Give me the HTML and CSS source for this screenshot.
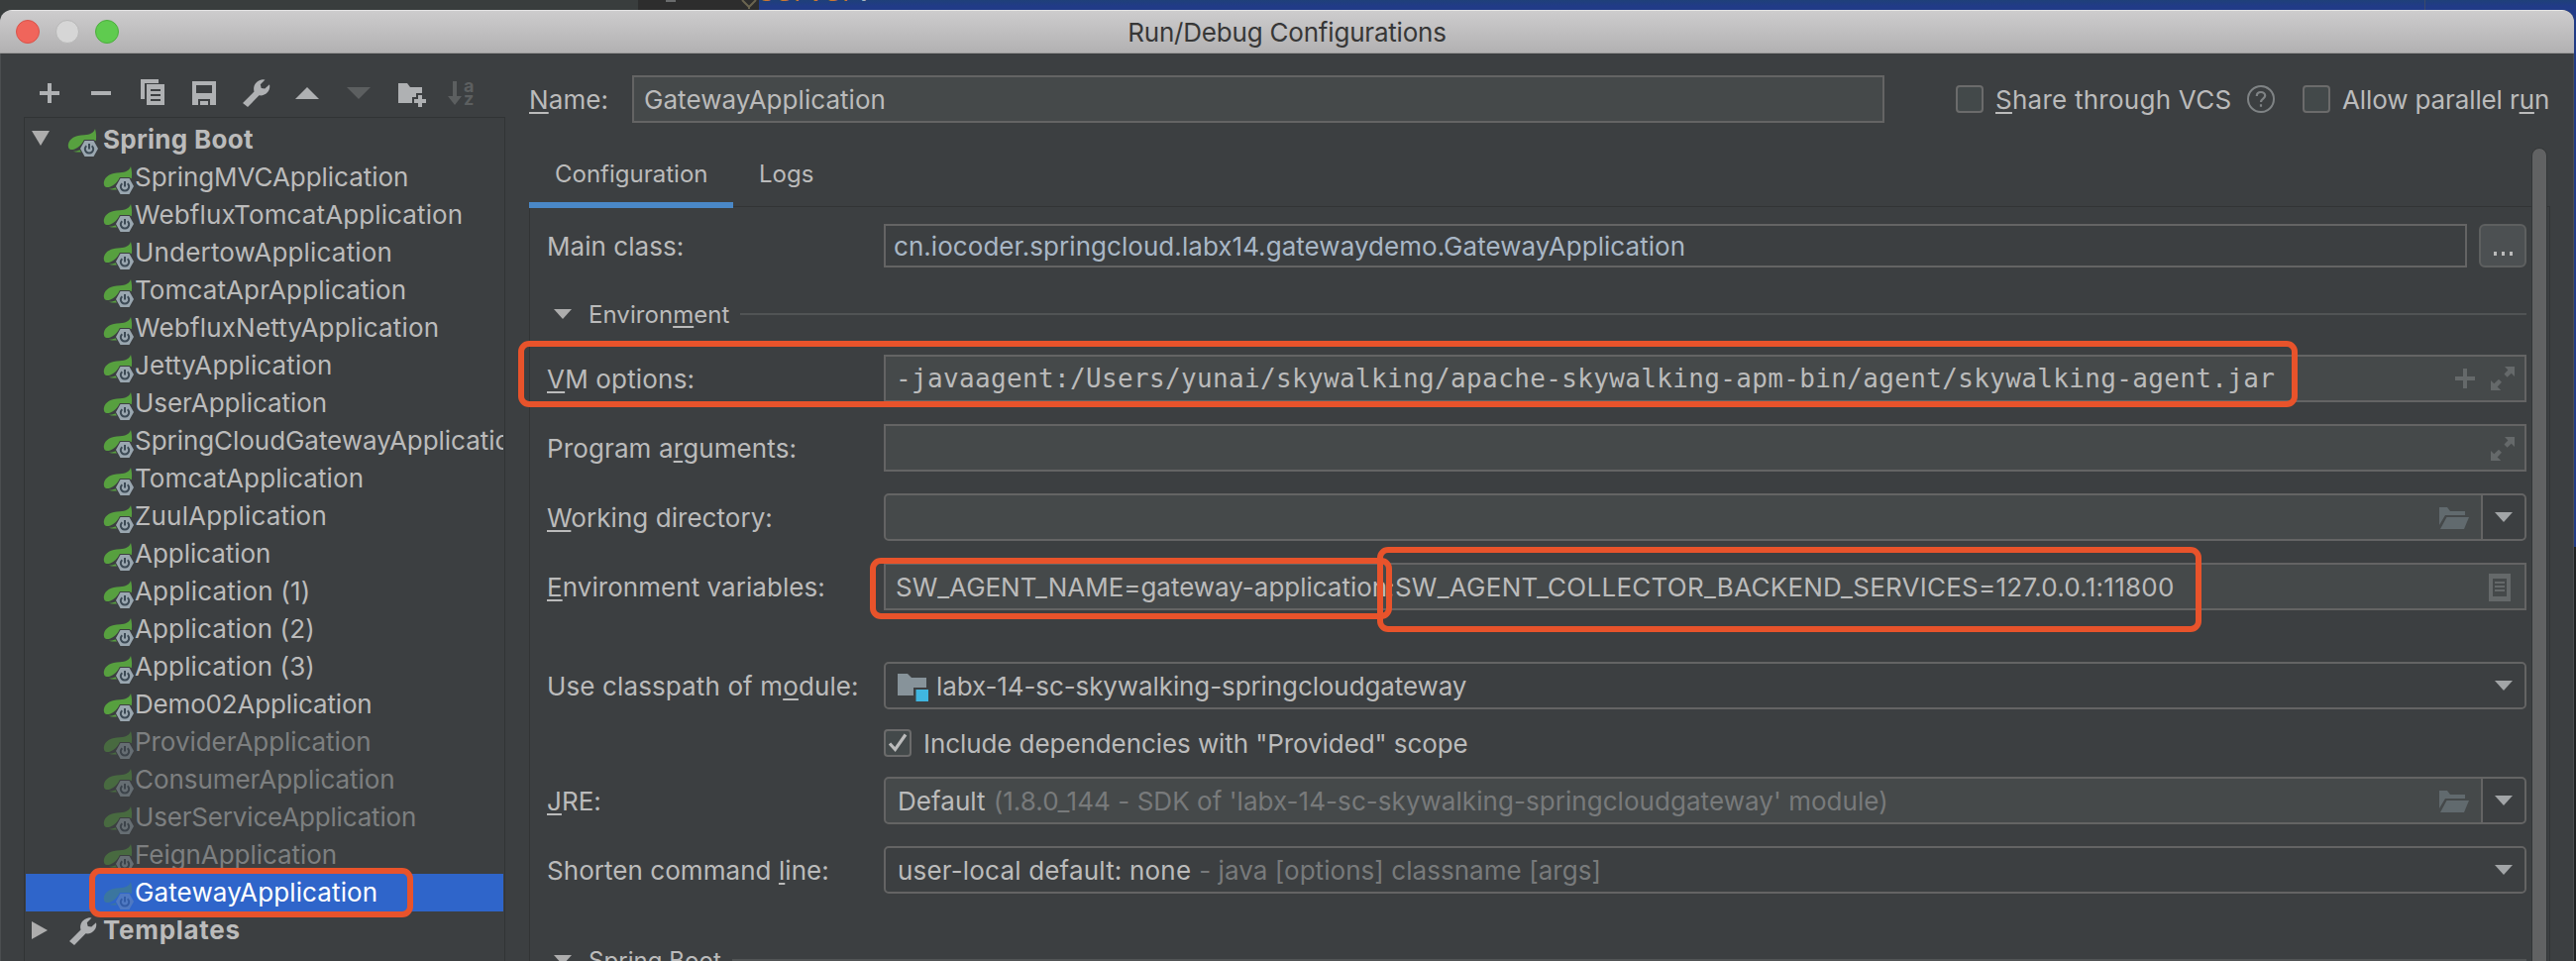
FILE: index.html
```
<!DOCTYPE html>
<html lang="en">
<head>
<meta charset="utf-8">
<title>Run/Debug Configurations</title>
<link rel="stylesheet" href="styles.css">
</head>
<body>
<svg class="defs" width="0" height="0">
  <symbol id="spring" viewBox="0 0 32 32">
    <path class="leaf" d="M29 2C27.500 6 24 8 18 8.300C9 8.800 3 11.500 1.800 18C1.600 20.500 2.500 23 4.500 23C9 23.500 13 20 16 16.500L29.800 14C30.500 10 30 6 29 2Z"/>
    <path class="leaf" d="M6.500 24.700C10 25 14 24 17 21V25.600H10Z"/>
    <path class="hex" d="M14 22L18.500 14H27.500L32 22L27.500 30H18.500Z"/>
    <path fill="none" stroke="#3c4a55" stroke-width="2" d="M20.300 19.200A4.200 4.200 0 1 0 25.700 19.200M23 17V22.500"/>
  </symbol>
  <symbol id="wrench" viewBox="0 0 32 32">
    <path fill="currentColor" d="M3 26L14.500 14.600C13 9 16 3.500 23 2.200L25.500 2.600L20.800 7.200L21.700 11L25.300 11.600L30 7.200C31.500 13 26.500 19.300 19.500 18.300L8 30Z"/>
  </symbol>
  <symbol id="expand" viewBox="0 0 24 24">
    <path fill="currentColor" d="M14 0H24V10L20.700 6.800L16.600 10.800L13.500 7.600L17.400 3.500ZM0 24V14L3.300 17.200L8 12.700L11 15.800L6.600 20.500L10.300 24Z"/>
  </symbol>
  <symbol id="folder-open" viewBox="0 0 30 22">
    <path fill="currentColor" d="M0 0H8L11 4H26V8H6L0 18ZM7.500 10H30L25 22H1Z"/>
  </symbol>
  <symbol id="tri-down" viewBox="0 0 18 10" preserveAspectRatio="none">
    <path fill="currentColor" d="M0 0H18L9 10Z"/>
  </symbol>
</svg>

<div class="editor-strip">
  <div class="strip-project"></div>
  <div class="strip-gutter"><i class="gutter-mark"></i>
    <svg class="fold" width="16" height="9" viewBox="0 0 16 9"><path d="M1 0L8 7L15 0M8 7V9" fill="none" stroke="#6b6550" stroke-width="2"/></svg>
  </div>
  <div class="strip-code"><span class="code-line">server<b>:</b></span></div>
  <div class="strip-edge"></div>
</div>

<main class="window">
  <header class="titlebar">
    <div class="lights"><i class="light close"></i><i class="light min"></i><i class="light max"></i></div>
    <h1 class="title">Run/Debug Configurations</h1>
  </header>

  <div class="body">
    <aside class="sidebar">
      <div class="toolbar">
        <svg viewBox="0 0 32 32"><path d="M14 6H18V14H26V18H18V26H14V18H6V14H14Z"/></svg>
        <svg viewBox="0 0 32 32"><path d="M6 14H26V18H6Z"/></svg>
        <svg viewBox="0 0 32 32"><path fill-rule="evenodd" d="M4 2H22V6H8V22H4ZM10 7H28V28H10ZM14 12V14H24V12ZM14 17V19H24V17ZM14 22V24H24V22Z"/></svg>
        <svg viewBox="0 0 32 32"><path fill-rule="evenodd" d="M4 4H28V28H22V22H10V28H4ZM8 8V16H24V8ZM12 24H20V28H12Z"/></svg>
        <svg><use href="#wrench"/></svg>
        <svg viewBox="0 0 32 32"><path d="M4 22L16 10L28 22Z"/></svg>
        <svg class="off" viewBox="0 0 32 32"><path d="M4 10H28L16 22Z"/></svg>
        <svg viewBox="0 0 32 32"><path d="M4 6H13L16 10H28V16H22V20H18V26H4ZM24 18H28V22H32V26H28V30H24V26H20V22H24Z"/></svg>
        <svg class="off" viewBox="0 0 32 32"><path d="M7 4H11V19H16L9 28L2 19H7Z"/><text x="18" y="14.500" class="az">a</text><text x="18" y="28" class="az">z</text></svg>
      </div>
      <div class="tree">
        <div class="row root"><svg class="twist"><path d="M0 0H18L9 15Z"/></svg><svg class="ico"><use href="#spring"/></svg><span>Spring Boot</span></div>
        <div class="row"><svg class="ico"><use href="#spring"/></svg><span>SpringMVCApplication</span></div>
        <div class="row"><svg class="ico"><use href="#spring"/></svg><span class="mid">WebfluxTomcatApplication</span></div>
        <div class="row"><svg class="ico"><use href="#spring"/></svg><span class="wide">UndertowApplication</span></div>
        <div class="row"><svg class="ico"><use href="#spring"/></svg><span class="mid">TomcatAprApplication</span></div>
        <div class="row"><svg class="ico"><use href="#spring"/></svg><span class="wide">WebfluxNettyApplication</span></div>
        <div class="row"><svg class="ico"><use href="#spring"/></svg><span class="mid">JettyApplication</span></div>
        <div class="row"><svg class="ico"><use href="#spring"/></svg><span>UserApplication</span></div>
        <div class="row"><svg class="ico"><use href="#spring"/></svg><span>SpringCloudGatewayApplication</span></div>
        <div class="row"><svg class="ico"><use href="#spring"/></svg><span class="mid">TomcatApplication</span></div>
        <div class="row"><svg class="ico"><use href="#spring"/></svg><span class="wide">ZuulApplication</span></div>
        <div class="row"><svg class="ico"><use href="#spring"/></svg><span>Application</span></div>
        <div class="row"><svg class="ico"><use href="#spring"/></svg><span class="wide">Application (1)</span></div>
        <div class="row"><svg class="ico"><use href="#spring"/></svg><span class="mid">Application (2)</span></div>
        <div class="row"><svg class="ico"><use href="#spring"/></svg><span class="mid">Application (3)</span></div>
        <div class="row"><svg class="ico"><use href="#spring"/></svg><span class="narrow">Demo02Application</span></div>
        <div class="row dim"><svg class="ico"><use href="#spring"/></svg><span>ProviderApplication</span></div>
        <div class="row dim"><svg class="ico"><use href="#spring"/></svg><span>ConsumerApplication</span></div>
        <div class="row dim"><svg class="ico"><use href="#spring"/></svg><span class="narrow">UserServiceApplication</span></div>
        <div class="row dim"><svg class="ico"><use href="#spring"/></svg><span>FeignApplication</span></div>
        <div class="row selected"><svg class="ico"><use href="#spring"/></svg><span class="mid">GatewayApplication</span></div>
        <div class="row root"><svg class="twist closed"><path d="M0 0L16 9L0 18Z"/></svg><svg class="ico wr"><use href="#wrench"/></svg><span class="templates">Templates</span></div>
      </div>
    </aside>

    <section class="detail">
      <div class="name-row">
        <label class="name-label"><u>N</u>ame:</label>
        <div class="field name-field">GatewayApplication</div>
        <i class="check"></i><span class="share"><u>S</u>hare through VCS</span>
        <svg class="help" viewBox="0 0 28 28"><circle cx="14" cy="14" r="13" fill="none" stroke="#7f8385" stroke-width="2"/><path d="M9.800 11C9.800 8.300 11.600 7 14 7C16.400 7 18.200 8.500 18.200 10.600C18.200 13.600 14 13.600 14 17M14 19.300V21.800" fill="none" stroke="#7f8385" stroke-width="2.200"/></svg>
        <i class="check"></i><span class="parallel">Allow parallel r<u>u</u>n</span>
      </div>

      <nav class="tabs">
        <div class="tab active">Configuration</div>
        <div class="tab logs">Logs</div>
      </nav>

      <div class="panel">
        <div class="line main-class">
          <label>Main class:</label>
          <div class="field flat">cn.iocoder.springcloud.labx14.gatewaydemo.GatewayApplication</div>
          <div class="dots"><i></i><i></i><i></i></div>
        </div>
        <div class="section env"><svg class="tri"><use href="#tri-down"/></svg><span>Environ<u>m</u>ent</span><hr></div>
        <div class="line vm">
          <label class="wide"><u>V</u>M options:</label>
          <div class="field mono"><span>-javaagent:/Users/yunai/skywalking/apache-skywalking-apm-bin/agent/skywalking-agent.jar</span>
            <svg class="plus" viewBox="0 0 20 20"><path d="M8 0H12V8H20V12H12V20H8V12H0V8H8Z"/></svg><svg class="expand"><use href="#expand"/></svg></div>
        </div>
        <div class="line">
          <label class="mid">Program a<u>r</u>guments:</label>
          <div class="field"><svg class="expand"><use href="#expand"/></svg></div>
        </div>
        <div class="line">
          <label><u>W</u>orking directory:</label>
          <div class="field combo"><svg class="folder"><use href="#folder-open"/></svg><div class="drop"><svg class="tri"><use href="#tri-down"/></svg></div></div>
        </div>
        <div class="line">
          <label><u>E</u>nvironment variables:</label>
          <div class="field vars"><span class="var-a">SW_AGENT_NAME=gateway-application;</span><span class="var-b">SW_AGENT_COLLECTOR_BACKEND_SERVICES=127.0.0.1:11800</span>
            <svg class="doc" viewBox="0 0 22 28"><path fill-rule="evenodd" d="M0 0H22V28H0ZM4 5V23H18V5ZM6 8H16V10H6ZM6 12H16V14H6ZM6 16H16V18H6Z"/></svg></div>
        </div>
        <div class="line module">
          <label class="mid">Use classpath of m<u>o</u>dule:</label>
          <div class="field combo flat-combo">
            <svg class="mod" viewBox="0 0 32 28"><path fill="#87939a" d="M0 0H10L14 4H29V14H16V22H0Z"/><path fill="#40b6e0" d="M18.500 16H31V28H18.500Z"/></svg>
            <span class="path">labx-14-sc-skywalking-springcloudgateway</span><div class="drop"><svg class="tri"><use href="#tri-down"/></svg></div></div>
        </div>
        <div class="include">
          <i class="check"><svg viewBox="0 0 28 28"><path d="M6 14.500L11.500 20.500L22 5.500" fill="none" stroke="#bbbbbb" stroke-width="3.200"/></svg></i><span>Include dependencies with "Provided" scope</span>
        </div>
        <div class="line jre">
          <label><u>J</u>RE:</label>
          <div class="field combo"><span>Default</span><span class="hint">(1.8.0_144 - SDK of 'labx-14-sc-skywalking-springcloudgateway' module)</span><svg class="folder"><use href="#folder-open"/></svg><div class="drop"><svg class="tri"><use href="#tri-down"/></svg></div></div>
        </div>
        <div class="line shorten">
          <label>Shorten command <u>l</u>ine:</label>
          <div class="field combo flat-combo"><span class="wide">user-local default: none</span><span class="hint">- java [options] classname [args]</span><div class="drop"><svg class="tri"><use href="#tri-down"/></svg></div></div>
        </div>
        <div class="section boot"><svg class="tri"><use href="#tri-down"/></svg><span>Spring Boot</span><hr></div>
      </div>
    </section>
  </div>
</main>

<div class="scrollbar"></div>
<div class="mark mark-tree"></div>
<div class="mark mark-vm"></div>
<div class="mark mark-name"></div>
<div class="mark mark-backend"></div>
</body>
</html>
```
FILE: styles.css
```
* { box-sizing: border-box; }

body {
  margin: 0;
  width: 2600px;
  height: 970px;
  overflow: hidden;
  position: relative;
  display: flex;
  flex-direction: column;
  background: linear-gradient(#213c86 0 552px, #1f2122 552px);
  color: #bbbbbb;
  font: 26px/32px Inter, "Liberation Sans", sans-serif;
  letter-spacing: 0.05px;
  white-space: nowrap;
}

u {
  text-decoration-thickness: 2px;
  text-underline-offset: 3px;
  text-decoration-skip-ink: none;
}

.defs { position: absolute; }

/* Sliver of the editor behind the dialog */
.editor-strip {
  display: flex;
  height: 22px;
  margin-bottom: -12px;
  flex: none;
  overflow: hidden;
}
.strip-project { width: 644px; background: #393d3d; }
.strip-gutter { width: 122px; background: #2d2d2d; display: flex; }
.gutter-mark { width: 10px; height: 2px; margin-left: 28px; background: #6a6c6d; }
.fold { margin-left: 66px; }
.strip-code { width: 1681px; background: linear-gradient(#1f4079 0, #213b87 6px); }
.strip-edge { flex: 1; border-left: 1px solid #3c4a6a; background: linear-gradient(#1f4079 0, #213b87 6px); }
.code-line {
  display: block;
  margin-top: -24px;
  font: 27px/32px "DejaVu Sans Mono", monospace;
  color: #cc7832;
}
.code-line b { font-weight: 400; color: #a9b7c6; }

/* Dialog window */
.window {
  flex: 1;
  min-height: 0;
  width: 2598px;
  display: flex;
  flex-direction: column;
  position: relative;
  border-radius: 12px 12px 0 0;
  overflow: hidden;
  background: #3c3f41;
}
.titlebar {
  flex: none;
  height: 44px;
  display: grid;
  grid-template-columns: 400px 1fr 400px;
  align-items: center;
  background: linear-gradient(#cdcccd, #b2b1b2);
  border-top: 1px solid #e4e4e4;
  border-bottom: 1px solid #9b9b9b;
}
.lights { display: flex; gap: 16px; padding-left: 16px; }
.light { width: 24px; height: 24px; border-radius: 50%; }
.close { background: #f0655b; border: 1px solid #d9534a; }
.min { background: #d6d6d6; border: 1px solid #b7b7b7; }
.max { background: #5fcb4f; border: 1px solid #4cae3d; }
.title {
  margin: 0;
  padding-top: 2px;
  text-align: center;
  font-size: 26px;
  font-weight: 400;
  letter-spacing: -0.2px;
  color: #373737;
}
.body {
  flex: 1;
  min-height: 0;
  display: flex;
  border-left: 1px solid #4b4e50;
  border-right: 1px solid #4b4e50;
}

/* Sidebar */
.sidebar { width: 533px; flex: none; display: flex; flex-direction: column; padding: 24px 24px 0 23px; }
.toolbar { display: flex; gap: 20px; padding-left: 10px; height: 40px; flex: none; color: #afb1b3; }
.toolbar svg { width: 32px; height: 32px; fill: #afb1b3; flex: none; }
.toolbar svg.off { fill: #5c5f60; }
.az { font: 700 18px/18px Inter, sans-serif; }
.tree {
  flex: 1;
  width: 486px;
  padding-top: 3px;
  border: 1px solid #313435;
  border-bottom: 0;
  overflow: hidden;
}
.row {
  --row-bg: #3c3f41;
  height: 38px;
  display: flex;
  align-items: center;
  padding-left: 77px;
  margin-left: 1px;
  margin-right: 1px;
  letter-spacing: -0.05px;
}
.row span { margin-left: 1px; overflow: hidden; }
.mid { letter-spacing: 0.12px; }
.wide { letter-spacing: 0.18px; }
.narrow { letter-spacing: -0.17px; }
.ico { width: 32px; height: 32px; margin-top: 5px; flex: none; }
.leaf { fill: #57a03f; }
.hex { fill: #9aa7b0; stroke: var(--row-bg); stroke-width: 2; paint-order: stroke; }
.root { padding-left: 6px; font-weight: 700; letter-spacing: 0.28px; }
.root span { margin-left: 5px; }
.root span.templates { letter-spacing: 0.7px; }
.twist { width: 18px; height: 15px; margin: 0 17px 4px 0; fill: #adadad; flex: none; }
.twist.closed { height: 18px; margin-bottom: 0; }
.ico.wr { color: #afb1b3; margin-top: 2px; }
.dim { color: #7d7f80; }
.dim .ico { opacity: 0.45; }
.selected { --row-bg: #2f65ca; background: #2f65ca; color: #ffffff; }
.selected .ico { opacity: 0.3; }

/* Detail pane */
.detail { flex: 1; display: flex; flex-direction: column; }
.name-row { display: flex; align-items: center; height: 48px; margin-top: 22px; flex: none; }
.name-label { width: 104px; padding-top: 2px; letter-spacing: 0.1px; }
.field {
  flex: 1;
  min-width: 0;
  height: 48px;
  padding: 1px 10px 0 11px;
  display: flex;
  align-items: center;
  background: #45494a;
  border: 2px solid #646464;
}
.name-field { flex: none; width: 1264px; margin-right: 72px; padding-left: 10px; }
.check {
  width: 28px;
  height: 28px;
  flex: none;
  background: #43494a;
  border: 2px solid #6b6b6b;
  border-radius: 4px;
}
.check svg { display: block; width: 28px; height: 28px; margin: -2px; }
.share { margin-left: 12px; padding-top: 1px; width: 254px; letter-spacing: 0.25px; }
.help { width: 28px; height: 28px; margin-right: 28px; }
.parallel { margin-left: 12px; padding-top: 1px; letter-spacing: -0.12px; }

.tabs { display: flex; height: 86px; flex: none; position: relative; z-index: 1; margin-bottom: -2px; font-size: 24px; }
.tab { height: 86px; padding: 36px 25px 0 26px; line-height: 32px; }
.tab.active { width: 206px; border-bottom: 6px solid #4a88c7; letter-spacing: 0; }

.panel {
  flex: 1;
  width: 2040px;
  padding: 17px 23px 0 16px;
  border: 1px solid #323435;
  border-bottom: 0;
}
.line { display: flex; height: 48px; margin-bottom: 22px; align-items: center; }
.line > label { width: 341px; padding-top: 1px; padding-left: 1px; flex: none; }
.main-class { height: 44px; margin-bottom: 23px; }
.main-class .field { height: 44px; padding: 1px 8px 0; }
.flat { background: #3c3f41; color: #a9b7c6; }
.dots {
  width: 48px;
  height: 44px;
  margin-left: 12px;
  display: flex;
  justify-content: center;
  align-items: flex-end;
  gap: 5px;
  padding-bottom: 10px;
  border: 2px solid #5e6060;
  border-radius: 6px;
  background: #4c5052;
}
.dots i { width: 3px; height: 4px; background: #bbbbbb; }

.section { display: flex; align-items: center; height: 48px; font-size: 24px; padding-left: 8px; }
.section span { padding-top: 1px; }
.section.env { margin-bottom: 17px; }
.section .tri { color: #adadad; margin-right: 17px; }
.section hr { flex: 1; margin: 0 0 0 11px; border: 0; height: 2px; background: #515455; }
.tri { width: 18px; height: 10px; flex: none; }

.mono { font: 26px/32px "DejaVu Sans Mono", Menlo, monospace; letter-spacing: 0.35px; padding: 0 10px 1px; }
.mono svg, .doc { fill: #65696a; }
.plus { width: 20px; height: 20px; margin: 0 16px 0 auto; }
.expand { width: 24px; height: 24px; color: #65696a; flex: none; }
.field > .expand:first-child { margin-left: auto; }
.doc { width: 22px; height: 28px; margin: 0 4px 0 auto; }
.var-a { letter-spacing: -0.02px; }
.var-b { letter-spacing: 0.25px; }

.combo { border-radius: 5px; padding: 0; align-items: stretch; }
.combo > span { padding-top: 7px; margin-left: 12px; }
.combo > .hint { color: #787a7b; margin-left: 8px; }
.folder { width: 30px; height: 22px; color: #616a6e; margin: 12px 12px 0 auto; }
.drop {
  width: 44px;
  padding-left: 1px;
  display: flex;
  align-items: center;
  justify-content: center;
  border-left: 2px solid #646464;
  border-radius: 0 4px 4px 0;
  background: #3c3f41;
  color: #a2a5a7;
}
.drop .tri { margin-right: 1px; }
.flat-combo { background: #3c3f41; }
.flat-combo .drop { margin-left: auto; border-left-color: transparent; }
.vars { padding-left: 10px; }
.module { margin: 52px 0 20px; }
.mod { width: 32px; height: 28px; margin: 10px 0 0 12px; }
.combo > .path { margin-left: 7px; letter-spacing: -0.1px; }
.include { display: flex; align-items: center; height: 28px; margin: 0 0 20px 341px; }
.include span { margin-left: 12px; padding-top: 2px; letter-spacing: -0.08px; }
.shorten { margin-bottom: 43px; }

/* Overlays */
.scrollbar {
  position: absolute;
  left: 2555px;
  top: 149px;
  width: 16px;
  height: 840px;
  border: 1px solid #333637;
  border-radius: 8px;
  background: #616263;
}
.mark { position: absolute; border: 6px solid #e8532b; border-radius: 11px; }
.mark-tree { left: 90px; top: 876px; width: 327px; height: 50px; }
.mark-vm { left: 523px; top: 344px; width: 1796px; height: 67px; }
.mark-name { left: 878px; top: 563px; width: 527px; height: 62px; }
.mark-backend { left: 1390px; top: 552px; width: 832px; height: 86px; }
```
